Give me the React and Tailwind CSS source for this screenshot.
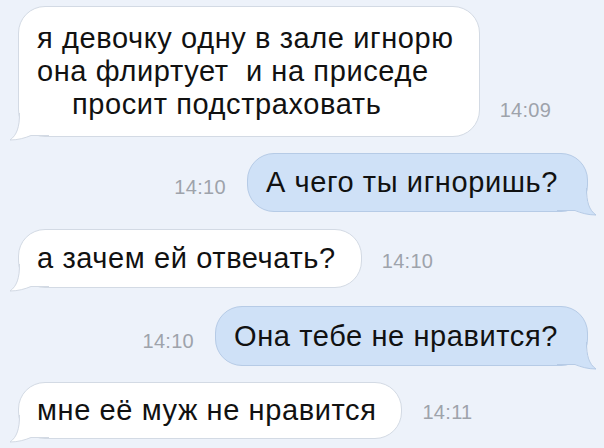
import React from 'react';

const messages = [
  { side: 'in', time: '14:09', lines: ['я девочку одну в зале игнорю', 'она флиртует  и на приседе', 'просит подстраховать'], mt: 'mt-[6px]', py: 'py-[15px]' },
  { side: 'out', time: '14:10', lines: ['А чего ты игноришь?'], mt: 'mt-[16px]', py: 'py-[12px]' },
  { side: 'in', time: '14:10', lines: ['а зачем ей отвечать?'], mt: 'mt-[17px]', py: 'py-[12px]' },
  { side: 'out', time: '14:10', lines: ['Она тебе не нравится?'], mt: 'mt-[18px]', py: 'pt-[13px] pb-[12px]' },
  { side: 'in', time: '14:11', lines: ['мне её муж не нравится'], mt: 'mt-[16px]', py: 'py-[11px]' },
];

const Tail = ({ side }) => {
  const fill = side === 'in' ? '#ffffff' : '#cfe1f7';
  const stroke = side === 'in' ? '#d3dae4' : '#b6cbe6';
  return (
    <svg
      width="40"
      height="28"
      viewBox="0 0 40 28"
      className={side === 'in' ? 'absolute -left-[10px] -bottom-[5px]' : 'absolute -right-[10px] -bottom-[5px] -scale-x-100'}
    >
      <path d="M11 0 C11 14 8 22 1 27 C9 27 16 25 22 22 L40 22 L40 0 Z" fill={fill} />
      <path d="M10.5 0 C10.5 14 8 22 1 27 C9 27 16 25 22 22.5 L40 22.5" fill="none" stroke={stroke} strokeWidth="1" />
    </svg>
  );
};

const Time = ({ children, className }) => (
  <span className={`text-[20px] leading-none text-[#9ea3ab] tracking-[0.3px] ${className}`}>{children}</span>
);

const Bubble = ({ msg }) => {
  const incoming = msg.side === 'in';
  return (
    <div
      className={
        incoming
          ? `relative bg-white border border-[#d3dae4] rounded-[27px] pl-[18px] pr-[25px] ${msg.py}`
          : `relative bg-[#cfe1f7] border border-[#b6cbe6] rounded-[27px] pl-[18px] pr-[29px] ${msg.py}`
      }
    >
      <Tail side={msg.side} />
      {msg.lines.map((l, i) => (
        <div key={i} className={`relative whitespace-pre text-[29px] leading-[33px] tracking-[0.6px] text-[#111] ${i === 2 ? 'pl-[35px]' : ''}`}>
          {l}
        </div>
      ))}
    </div>
  );
};

export default function App() {
  return (
    <div className="w-[604px] h-[448px] overflow-hidden bg-[#edf2fa] flex flex-col" style={{ fontFamily: '"Liberation Sans", Arial, sans-serif' }}>
      {messages.map((m, i) =>
        m.side === 'in' ? (
          <div key={i} className={`flex items-end gap-[20px] pl-[18px] ${m.mt}`}>
            <Bubble msg={m} />
            <Time className="mb-[17px]">{m.time}</Time>
          </div>
        ) : (
          <div key={i} className={`flex items-end justify-end gap-[21px] pr-[16px] ${m.mt}`}>
            <Time className="mb-[15px]">{m.time}</Time>
            <Bubble msg={m} />
          </div>
        )
      )}
    </div>
  );
}
